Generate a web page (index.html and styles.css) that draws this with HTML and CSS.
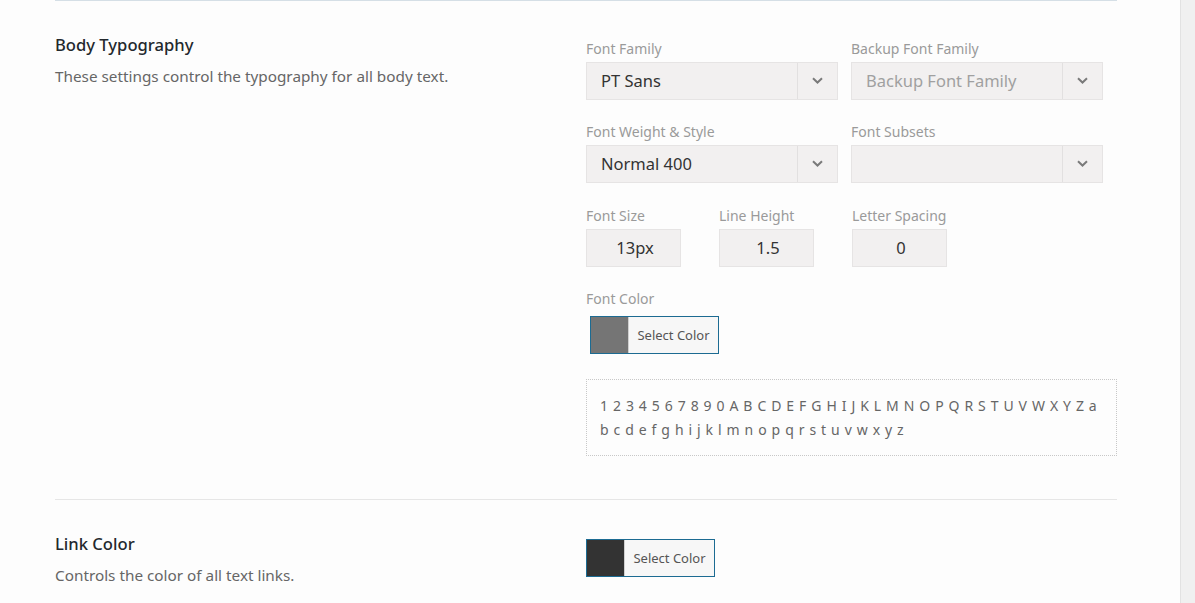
FILE: index.html
```html
<!DOCTYPE html>
<html>
<head>
<meta charset="utf-8">
<link rel="stylesheet" href="styles.css">
</head>
<body>
<div class="app">
  <main class="main">
    <section class="section section-first">
      <div class="info">
        <h3 class="title">Body Typography</h3>
        <p class="desc">These settings control the typography for all body text.</p>
      </div>
      <div class="controls">
        <div class="row row-2">
          <div class="field">
            <label class="label">Font Family</label>
            <div class="select"><span class="select-value">PT Sans</span><span class="select-arrow"><svg width="11" height="7" viewBox="0 0 11 7"><path d="M1 1.2 L5.5 5.5 L10 1.2" fill="none" stroke="#7a7a7a" stroke-width="2"/></svg></span></div>
          </div>
          <div class="field">
            <label class="label">Backup Font Family</label>
            <div class="select"><span class="select-value placeholder">Backup Font Family</span><span class="select-arrow"><svg width="11" height="7" viewBox="0 0 11 7"><path d="M1 1.2 L5.5 5.5 L10 1.2" fill="none" stroke="#7a7a7a" stroke-width="2"/></svg></span></div>
          </div>
        </div>
        <div class="row row-2">
          <div class="field">
            <label class="label">Font Weight &amp; Style</label>
            <div class="select"><span class="select-value">Normal 400</span><span class="select-arrow"><svg width="11" height="7" viewBox="0 0 11 7"><path d="M1 1.2 L5.5 5.5 L10 1.2" fill="none" stroke="#7a7a7a" stroke-width="2"/></svg></span></div>
          </div>
          <div class="field">
            <label class="label">Font Subsets</label>
            <div class="select"><span class="select-value"></span><span class="select-arrow"><svg width="11" height="7" viewBox="0 0 11 7"><path d="M1 1.2 L5.5 5.5 L10 1.2" fill="none" stroke="#7a7a7a" stroke-width="2"/></svg></span></div>
          </div>
        </div>
        <div class="row row-3">
          <div class="field">
            <label class="label">Font Size</label>
            <div class="input">13px</div>
          </div>
          <div class="field">
            <label class="label">Line Height</label>
            <div class="input">1.5</div>
          </div>
          <div class="field">
            <label class="label">Letter Spacing</label>
            <div class="input">0</div>
          </div>
        </div>
        <div class="row">
          <div class="field">
            <label class="label">Font Color</label>
            <button class="color-btn color-btn-inset"><span class="swatch swatch-grey"></span><span class="color-text">Select Color</span></button>
          </div>
        </div>
        <div class="preview">1 2 3 4 5 6 7 8 9 0 A B C D E F G H I J K L M N O P Q R S T U V W X Y Z a b c d e f g h i j k l m n o p q r s t u v w x y z</div>
      </div>
    </section>
    <section class="section section-second">
      <div class="info">
        <h3 class="title">Link Color</h3>
        <p class="desc">Controls the color of all text links.</p>
      </div>
      <div class="controls controls-link">
        <button class="color-btn"><span class="swatch swatch-dark"></span><span class="color-text">Select Color</span></button>
      </div>
    </section>
  </main>
  <div class="scrollbar"></div>
</div>
</body>
</html>
```

FILE: styles.css
```css
* { box-sizing: border-box; }
html, body { margin: 0; padding: 0; }
body {
  font-family: "Noto Sans", "Open Sans", sans-serif;
  background: #fdfdfd;
  color: #444;
  width: 1195px;
  height: 603px;
  overflow: hidden;
}
.app {
  display: flex;
  height: 603px;
}
.main {
  flex: 1;
  padding: 0 63px 0 55px;
  background: #fdfdfd;
}
.scrollbar {
  width: 15px;
  background: #f0f0f0;
  border-left: 1px solid #e2e2e2;
}
.section {
  display: grid;
  grid-template-columns: 531px 531px;
}
.section-first {
  border-top: 1px solid #d5dfe6;
  padding-top: 32px;
  padding-bottom: 43px;
}
.section-second {
  border-top: 1px solid #e6e6e6;
  padding-top: 32px;
}
.title {
  margin: 0;
  font-size: 16.6px;
  line-height: 24px;
  font-weight: 500;
  color: #23282d;
}
.desc {
  margin: 8px 0 0;
  font-size: 15.3px;
  line-height: 22px;
  color: #666;
}
.controls {
  padding-top: 6px;
  display: flex;
  flex-direction: column;
  gap: 22px;
}
.controls-link { padding-top: 7px; }
.row {
  display: flex;
}
.row-2 { gap: 13px; }
.row-3 { gap: 38px; margin-top: 1px; }
.label {
  display: block;
  font-size: 14px;
  line-height: 20px;
  color: #9a9a9a;
  margin-bottom: 3px;
}
.select {
  width: 252px;
  height: 38px;
  display: flex;
  background: #f2f0f0;
  border: 1px solid #e6e4e4;
}
.select-value {
  flex: 1;
  padding-left: 14px;
  font-size: 16.5px;
  line-height: 36px;
  color: #333;
}
.select-value.placeholder { color: #a0a0a0; }
.select-arrow {
  width: 40px;
  border-left: 1px solid #e2e0e0;
  display: flex;
  align-items: center;
  justify-content: center;
  padding-bottom: 2px;
}
.input {
  width: 95px;
  height: 38px;
  background: #f2f0f0;
  border: 1px solid #e6e4e4;
  font-size: 16.5px;
  line-height: 36px;
  text-align: center;
  padding-left: 3px;
  color: #333;
}
.color-btn {
  display: flex;
  width: 129px;
  height: 38px;
  padding: 0;
  border: 1px solid #1c6b92;
  background: #f7f7f7;
  font-family: inherit;
  cursor: pointer;
}
.color-btn-inset {
  margin: 7px 0 0 4px;
}
.swatch {
  width: 38px;
  height: 100%;
  border-right: 1px solid #d0d0d0;
}
.swatch-grey { background: #757575; }
.swatch-dark { background: #333333; }
.color-text {
  flex: 1;
  font-size: 13px;
  line-height: 36px;
  color: #555;
  text-align: center;
}
.preview {
  margin-top: 3px;
  border: 1px dotted #c8c8c8;
  padding: 14px 9px 13px 13px;
  font-size: 14px;
  line-height: 24px;
  letter-spacing: 0.65px;
  color: #666;
}
```
